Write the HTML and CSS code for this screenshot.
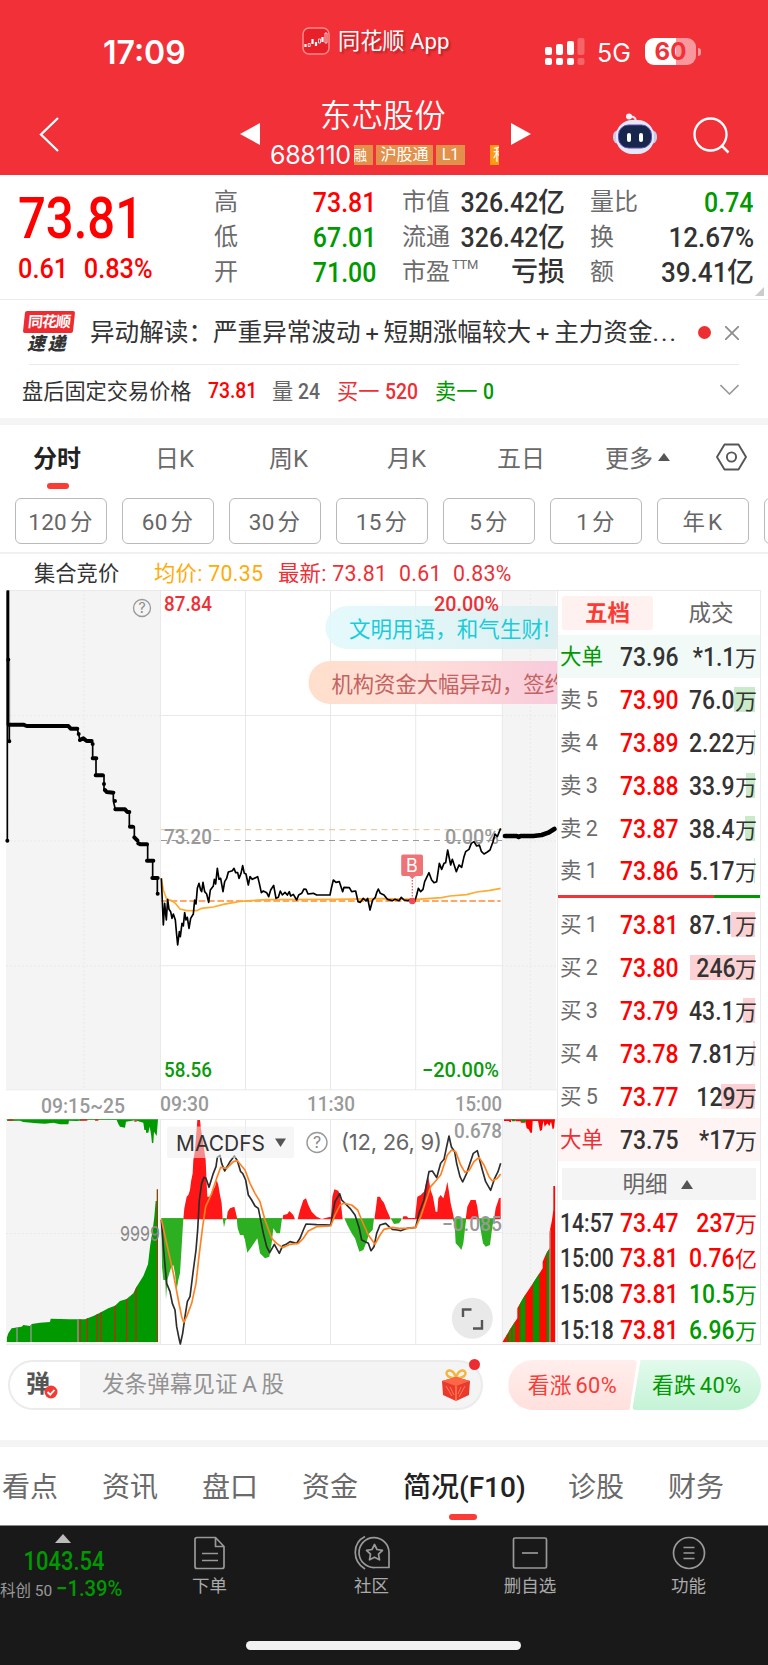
FILE: index.html
```html
<!DOCTYPE html>
<html lang="zh-CN">
<head>
<meta charset="utf-8">
<title>东芯股份 688110</title>
<link rel="stylesheet" href="styles.css">
</head>
<body>
<header class="top">
  <div class="status">
    <div class="clock">17:09</div>
    <div class="brand">
      <svg width="28" height="28" viewBox="0 0 28 28"><rect x="1" y="1" width="26" height="26" rx="6" fill="#e8202a" stroke="#ff8a8a" stroke-width="1.5"/><path d="M3.500 17v3M10.500 12v5M14 15v4M20.500 10v5" stroke="#fff" stroke-width="2.200" fill="none"/><path d="M6.200 16.500h2v3h-2zM16.500 12h2v4h-2zM23 6h2v10h-2z" stroke="#fff" stroke-width=".8" fill="none"/></svg>
      <span>同花顺 App</span>
    </div>
    <svg class="signal" width="40" height="28" viewBox="0 0 40 28" fill="#fff"><rect x="0" y="9" width="7" height="8" rx="2"/><rect x="11" y="6" width="7" height="11" rx="2"/><rect x="22" y="3" width="7" height="14" rx="2"/><rect x="32.500" y="0" width="7" height="17" rx="2" opacity=".25"/><rect x="0" y="20" width="7" height="7" rx="2"/><rect x="11" y="20" width="7" height="7" rx="2"/><rect x="22" y="20" width="7" height="7" rx="2"/><rect x="32.500" y="20" width="7" height="7" rx="2" opacity=".25"/></svg>
    <div class="net">5G</div>
    <div class="battery"><span>60</span></div>
    <div class="nub"></div>
  </div>
  <div class="nav">
    <svg class="back" width="21" height="37" viewBox="0 0 21 37"><path d="M19 2 2 18.500 19 35" fill="none" stroke="#fff" stroke-width="2.300"/></svg>
    <svg class="prev" width="20" height="22" viewBox="0 0 20 22"><path d="M20 0v22L0 11z" fill="#fff"/></svg>
    <div class="stock">
      <h1>东芯股份</h1>
      <div class="code"><b>688110</b><span class="tag cut">融</span><span class="tag">沪股通</span><span class="tag l1">L1</span><span class="tag last">科</span></div>
    </div>
    <svg class="next" width="20" height="22" viewBox="0 0 20 22"><path d="M0 0v22l20-11z" fill="#fff"/></svg>
    <svg class="robot" width="44" height="42" viewBox="0 0 44 42"><path d="M15 4q7-2 8 4" fill="none" stroke="#e4e6f8" stroke-width="2"/><circle cx="16" cy="3.500" r="3" fill="#f4f4fc"/><rect x="0" y="17" width="44" height="14" rx="6" fill="#c9cdec"/><rect x="3" y="7" width="38" height="34" rx="16" fill="#e6e8f8"/><rect x="5.500" y="12" width="33" height="23" rx="10" fill="#17264b" stroke="#5b4bb4"/><rect x="14" y="20" width="4" height="9" rx="2" fill="#fff"/><rect x="26" y="20" width="4" height="9" rx="2" fill="#fff"/></svg>
    <svg class="search" width="37" height="37" viewBox="0 0 37 37"><circle cx="17.500" cy="17.500" r="16" fill="none" stroke="#fff" stroke-width="2.300"/><path d="m29 29 6.500 6.500" stroke="#fff" stroke-width="2.500"/></svg>
  </div>
</header>

<section class="quote">
  <div class="last-price">
    <strong>73.81</strong>
    <p><span>0.61</span><span>0.83%</span></p>
  </div>
  <dl>
    <div><dt>高</dt><dd class="red"><b>73.81</b></dd></div>
    <div><dt>低</dt><dd class="green"><b>67.01</b></dd></div>
    <div><dt>开</dt><dd class="green"><b>71.00</b></dd></div>
  </dl>
  <dl>
    <div><dt>市值</dt><dd><b>326.42</b>亿</dd></div>
    <div><dt>流通</dt><dd><b>326.42</b>亿</dd></div>
    <div><dt>市盈<sup>TTM</sup></dt><dd>亏损</dd></div>
  </dl>
  <dl>
    <div><dt>量比</dt><dd class="green"><b>0.74</b></dd></div>
    <div><dt>换</dt><dd><b class="wide">12.67%</b></dd></div>
    <div><dt>额</dt><dd><b class="wide">39.41</b>亿</dd></div>
  </dl>
  <i class="corner"></i>
</section>

<section class="news">
  <div class="logo"><span class="logo-top"><em>同花顺</em></span><span class="logo-bottom">速 递</span></div>
  <p>异动解读：严重异常波动<i>+</i>短期涨幅较大<i>+</i>主力资金<u>...</u></p>
  <span class="dot"></span>
  <svg width="14" height="14" viewBox="0 0 14 14"><path d="m0 0 14 14M14 0 0 14" stroke="#8e8e8e" stroke-width="1.800"/></svg>
</section>

<section class="after">
  <span>盘后固定交易价格</span>
  <b class="red">73.81</b>
  <span class="grey">量 <b>24</b></span>
  <span class="crimson">买一 <b>520</b></span>
  <span class="green">卖一 <b>0</b></span>
  <svg width="19" height="11" viewBox="0 0 19 11"><path d="m.5 1 9 9 9-9" fill="none" stroke="#999" stroke-width="1.600"/></svg>
</section>

<nav class="periods">
  <span class="on">分时</span><span>日K</span><span>周K</span><span>月K</span><span>五日</span><span>更多<i class="up"></i></span>
  <svg width="31" height="28" viewBox="0 0 31 28"><path d="M8.500 1.500h14L30 14l-7.500 12.500h-14L1 14z" fill="none" stroke="#555" stroke-width="1.900" stroke-linejoin="round"/><circle cx="15.500" cy="14" r="4.600" fill="none" stroke="#555" stroke-width="1.900"/></svg>
</nav>

<div class="minutes">
  <span>120 分</span><span>60 分</span><span>30 分</span><span>15 分</span><span>5 分</span><span>1 分</span><span>年 K</span><span></span>
</div>

<div class="info"><span>集合竞价</span><span class="amber">均价: 70.35</span><span class="crimson">最新: 73.81</span><span class="crimson">0.61</span><span class="crimson">0.83%</span></div>

<main class="board">
<svg class="chart" width="557" height="757" viewBox="0 590 557 757">
  <defs>
    <linearGradient id="pinkPill" x1="0" x2="1"><stop offset="0" stop-color="#ffdcc8"/><stop offset=".45" stop-color="#ffdcd6"/><stop offset="1" stop-color="#f8c8da"/></linearGradient>
    <linearGradient id="cyanPill" x1="0" x2="1"><stop offset="0" stop-color="#e2f9fc"/><stop offset="1" stop-color="#d9eeF0"/></linearGradient>
    <clipPath id="volL"><path d="M20 727V715L25 700 35 685 65 680 70 675 90 678 95 672 120 668 150 666 152 656 210 658 255 658 280 648 300 638 325 625 345 617 360 603 380 597 400 580 408 563 430 528 444 493 450 440 458 390 463 350 467 303 470 303V268H474V727z"/></clipPath>
    <clipPath id="volR"><path d="M1507 727 1520 705 1535 680 1552 655V625L1572 590 1592 560 1617 522 1628 505V485L1639 460 1649 445V395L1656 360 1660 330V258H1666V727z"/></clipPath>
  </defs>
  <rect x="6" y="591" width="154" height="498" fill="#f4f4f4"/>
  <rect x="502" y="591" width="54" height="498" fill="#f4f4f4"/>
  <rect x="6" y="1119" width="154" height="225" fill="#f4f4f4"/>
  <rect x="502" y="1119" width="54" height="225" fill="#f4f4f4"/>
  <g stroke="#e9e9e9" fill="none">
    <path d="M6 590.500H557M6 1089.800H557M6 1119.500H557M6 1344.500H557M160.500 590V1090M160.500 1119V1345M502.300 590V1090M502.300 1119V1345M245.500 590V1090M330.500 590V1090M415.700 590V1090M245.500 1119V1345M330.500 1119V1345M415.700 1119V1345M160 715.500H502M160 965.700H502M160 1232.500H502"/>
    <path stroke-dasharray="2 2" d="M84 590V1090M84 1119V1345M530.300 590V1090M530.300 1119V1345M6 715.800H160M502 715.800H556M6 966H160M502 966H556M6 1233.500H160M502 1233.500H556M6 841H160M502 841H556"/>
  </g>
  <g>
    <path d="M557 606H347a21 21 0 0 0 0 43H557z" fill="url(#cyanPill)" opacity=".9"/>
    <path d="M557 661H330a21 21 0 0 0 0 43H557z" fill="url(#pinkPill)" opacity=".93"/>
    <g class="cjk"><text x="349" y="636.500" textLength="201" lengthAdjust="spacing" font-size="21.500" fill="#19ccd9">文明用语，和气生财!</text>
    <text x="331.500" y="691.500" font-size="21.300" fill="#c4625f">机构资金大幅异动，签约</text></g>
  </g>
  <g fill="none" stroke-width="1.200"><path d="M161 829.700H502" stroke="#e6cda8" stroke-dasharray="6 4.500"/><path d="M161 840.500H502" stroke="#999" stroke-dasharray="6 4.500"/></g>
  <g class="num" font-size="20.500">
    <text x="164" y="611" textLength="48" lengthAdjust="spacingAndGlyphs" fill="#ee2f35">87.84</text>
    <text x="434" y="611" textLength="65" lengthAdjust="spacingAndGlyphs" fill="#ee2f35">20.00%</text>
    <text x="164" y="844" textLength="48" lengthAdjust="spacingAndGlyphs" fill="#999">73.20</text>
    <text x="445" y="844" textLength="54" lengthAdjust="spacingAndGlyphs" fill="#999">0.00%</text>
    <text x="164" y="1077" textLength="48" lengthAdjust="spacingAndGlyphs" fill="#0a9a0a">58.56</text>
    <text x="422" y="1077" textLength="77" lengthAdjust="spacingAndGlyphs" fill="#0a9a0a">−20.00%</text>
    <g fill="#999"><text x="41" y="1113" textLength="84" lengthAdjust="spacingAndGlyphs">09:15~25</text>
    <text x="160" y="1111" textLength="49" lengthAdjust="spacingAndGlyphs">09:30</text>
    <text x="307" y="1111" textLength="48" lengthAdjust="spacingAndGlyphs">11:30</text>
    <text x="455" y="1111" textLength="47" lengthAdjust="spacingAndGlyphs">15:00</text></g>
  </g>
  <g fill="none" stroke="#999" stroke-width="1.300"><circle cx="142" cy="608" r="8.500"/></g>
  <text class="sans" x="142" y="613" font-size="14" text-anchor="middle" fill="#888">?</text>
  <g transform="translate(0 580) scale(.33333)" fill="none" stroke="#000" stroke-linejoin="round" stroke-linecap="round">
    <path stroke-width="5" d="M22 35V782M28 435V485M232 447 240 480M275 485 278 493V535H288V585H312V632M340 638V663L346 688M388 697V740H403V772M443 793V842H458V894H472V942"/>
    <path stroke-width="8" stroke-linecap="butt" d="M24 31V435"/>
    <path stroke-width="3" stroke="#777" stroke-linecap="butt" d="M29 245V430"/>
    <path stroke-width="12" d="M26 434H70L80 438H205L212 446H232M236 462V462.100M240 480 250 475 260 483H275M278 492V492.100M278 535H289M287 586H308M312 612V612.100M315 630 320 636 340 638M345 663V663.100M346 688H375L382 696H388M390 740H398M403 772 412 781M415 790 422 793H441M441 842H460M457 894H473M473 941V941.100M28 484V484.100M22 782V782.100M25 239V239.100"/>
    <path stroke-width="14" d="M1515 768H1550L1556 771 1562 768H1600L1625 765 1645 758 1663 747"/>
  </g>
  <g transform="translate(0 840) scale(.33333)" fill="none" stroke-linejoin="round">
    <path stroke="#ff8a33" stroke-width="5" stroke-dasharray="20 8" d="M484 183H1502"/>
    <path stroke="#ffab2e" stroke-width="5" d="M484 115 490 150 500 178 515 182 526 190 540 207 560 212 590 212 605 205 640 201 670 193 720 184 800 179 1000 178 1150 176 1250 178 1325 173 1350 168 1400 164 1430 156 1470 151 1502 145"/>
    <path stroke="#000" stroke-width="5" d="M484 115 490 255 494 190 499 240 503 178 507 208 512 215 516 235 520 222 526 240 530 285 533 315 538 275 541 290 546 250 550 258 554 218 558 240 562 232 567 265 572 235 580 222 584 180 588 192 592 145 597 130 602 150 605 155 609 127 614 155 620 162 626 187 631 150 640 138 643 118 647 132 652 85 657 118 662 115 669 155 674 125 680 115 685 96 697 92 702 85 707 98 713 98 717 115 723 100 728 77 733 100 738 102 745 135 750 110 757 118 773 110 778 130 784 158 790 153 800 158 806 170 812 150 821 136 828 175 835 172 841 153 847 165 855 157 862 165 868 155 872 168 880 163 890 180 896 165 905 160 912 147 918 148 924 162 940 160 950 165 990 165 994 145 1000 120 1008 127 1018 125 1028 155 1032 142 1048 143 1055 155 1067 153 1074 185 1081 187 1090 175 1098 183 1103 175 1110 210 1118 180 1126 172 1130 158 1135 147 1141 160 1152 165 1162 178 1177 182 1185 178 1197 182 1204 172 1212 180 1224 182 1232 178 1244 185 1250 165 1255 145 1262 155 1269 148 1274 125 1287 98 1295 120 1302 128 1310 125 1318 70 1325 88 1332 70 1337 68 1343 30 1352 75 1357 58 1369 95 1377 75 1385 82 1392 50 1397 35 1407 28 1414 10 1422 5 1430 18 1438 15 1444 34 1452 42 1462 36 1470 30 1479 5 1485 -18 1492 -10 1498 -25 1502 -35"/>
  </g>
  <circle cx="412.300" cy="901" r="3.300" fill="#f04a52"/><path d="M412.300 877V899" stroke="#ee555c" stroke-width="1.200" stroke-dasharray="1.500 1.500"/>
  <path d="M403 854.500H421q2 0 2 2V874q0 2-2 2h-5.500l-3.200 3-3.200-3H403q-1.800 0-1.800-2V856.500q0-2 1.800-2z" fill="#ee7376"/>
  <text class="sans" x="412" y="872" font-size="18" text-anchor="middle" fill="#fff">B</text>
  <g transform="translate(0 1100) scale(.33333)">
    <g clip-path="url(#volL)"><path fill="#090" d="M18 200H476V727H18z"/><path stroke="#b53012" stroke-width="4" d="M240 500V727M262 500V727M291 500V727M303 500V727M345 500V727M380 500V727M408 500V727M473 200V727"/><path stroke="#999" stroke-width="4" d="M51 500V727M93 500V727M234 500V727"/></g>
    <path fill="#090" d="M20 58 22 63 60 62 70 66 110 70 135 71 160 68 180 73 205 73 207 62 230 63 260 60 350 60 355 72 360 80 375 83 378 65 405 61 430 68 433 90H438V98H445L449 80 453 102 456 130 460 128 462 95 470 108 474 58z"/>
    <path stroke="#d22" stroke-width="4" d="M240 60H262M285 60H295M403 63H410M25 60H40"/>
    <g clip-path="url(#volR)"><path fill="#ff0800" d="M1507 200H1668V730H1507z"/><path stroke="#090" stroke-width="8" d="M1530 400V727M1541 400V727M1566 400V727M1572 400V727M1606 400V727M1614 400V727M1644 400V727"/><path stroke="#090" stroke-width="3" d="M1520 400V727M1560 400V727M1600 400V727"/><path stroke="#999" stroke-width="4" d="M1650 390V727"/></g>
    <path fill="#f00" d="M1512 58V63H1528V66H1533V60H1546V64H1562V68H1575V60L1580 85 1586 88 1591 98 1596 98 1598 63H1614L1620 93 1626 90 1630 62 1634 80 1642 70 1648 78 1653 65 1658 88 1662 85 1665 58z"/><path stroke="#090" stroke-width="6" d="M1535 61H1545M1563 63H1577"/>
    <path fill="#ff1717" d="M550 358 553 325 560 290 565 285 570 270 573 245 578 220 580 180 585 150 592 60H600L603 88 610 130 617 180 620 250 622 290H632L635 275 645 260 650 240 655 255 660 285 665 310 668 358zM680 358 683 335 690 325 703 320 707 335 712 358zM847 358 850 345 862 342 868 333 880 345 885 358zM893 358 900 330 910 300 918 295 925 315 935 335 950 350 965 357 985 352 993 350 997 290 1003 268 1015 272 1020 285 1025 330 1028 358zM1123 358 1127 330 1132 290H1140L1145 300 1152 308 1160 330 1167 345 1172 358zM1207 358 1210 349 1220 349 1225 354H1245L1252 290 1262 285 1272 275 1279 245 1285 232 1292 270 1299 290 1307 335H1312L1315 295 1322 285 1330 295 1337 270 1342 245 1347 275 1352 310 1360 345 1362 358zM1397 358 1402 320 1412 300H1427L1432 320 1437 358zM1482 358 1487 325 1497 295 1502 293V358z"/>
    <path fill="#2caf20" d="M484 355 486 500 490 540H496L498 598 502 540 508 520 514 500 520 495 525 520 530 570 535 540 540 520 545 440 550 355zM668 355 672 382 678 355zM710 355 713 385 720 405H730L735 420 742 458 755 440 765 425 772 415 780 460 795 475 808 470 815 430 820 385 830 400H840L846 355zM1033 355 1042 375 1055 400 1065 415 1078 455 1090 450 1100 425 1108 400 1118 390 1122 355zM1172 355 1182 372 1197 370 1204 360V355zM1357 355 1364 372 1367 430 1377 440 1384 450 1390 430 1397 370 1399 355zM1437 355 1442 390 1449 430 1457 440 1470 435 1477 380 1482 355z"/>
    <path d="M484 357H550M668 357H680M712 357H846" stroke="#2caf20" stroke-width="5"/>
    <g fill="none" stroke-linejoin="round" stroke-width="5"><path stroke="#2d2d2d" d="M484 360 490 440 500 550 510 575 517 610 525 630 530 680 537 715 541 732 548 700 555 650 562 605 570 590 580 510 588 450 593 390 598 300 605 250 612 232 618 235 627 262 640 220 648 200 652 172 660 166 665 190 674 213 690 185 703 168 712 182 722 215 728 220 737 240 745 285 755 300 765 318 775 325 780 350 790 400 800 440 809 458 823 433 838 460 848 437 860 432 870 425 890 430 900 415 910 390 918 372 950 374 992 375 998 340 1005 305 1019 281 1025 300 1050 325 1065 345 1078 385 1085 420 1105 430 1113 452 1122 440 1130 400 1140 375 1157 370 1167 380 1177 388 1192 390 1202 392 1222 385 1247 382 1257 340 1272 300 1280 250 1287 215 1297 213 1310 233 1322 190 1332 178 1340 140 1347 108 1354 140 1364 155 1370 190 1380 230 1388 246 1400 220 1410 190 1420 160 1432 152 1439 180 1447 210 1457 245 1472 271 1484 235 1494 215 1502 190"/>
    <path stroke="#ff8222" d="M484 357 500 430 520 520 535 600 545 650 551 667 560 650 575 610 588 550 598 460 608 380 617 320 635 280 650 235 662 202 680 205 700 185 712 182 735 210 750 250 765 280 780 305 795 360 815 415 830 430 848 443 870 433 895 430 910 415 925 393 950 380 992 378 1005 345 1020 315 1032 310 1055 315 1073 330 1085 360 1105 405 1125 433 1140 405 1152 388 1177 382 1197 385 1222 385 1247 382 1262 350 1277 305 1292 260 1307 243 1322 225 1342 165 1355 150 1367 155 1382 195 1395 217 1407 212 1422 185 1437 172 1452 195 1467 230 1477 243 1492 235 1502 222"/></g>
  </g>
  <rect x="167" y="1126.500" width="127" height="31.500" rx="2" fill="#eee" fill-opacity=".55"/>
  <g class="sans" font-size="22"><text x="176" y="1150.500" textLength="89" lengthAdjust="spacingAndGlyphs" fill="#333">MACDFS</text><path d="M275 1138.500h11l-5.500 8.500z" fill="#555"/>
    <circle cx="317" cy="1142.500" r="10" fill="none" stroke="#999" stroke-width="1.400"/><text x="317" y="1148" font-size="16" text-anchor="middle" fill="#888">?</text>
    <text x="341" y="1150" textLength="101" lengthAdjust="spacing" fill="#666">(12, 26, 9)</text>
    <text x="120" y="1241" font-size="20" textLength="40" lengthAdjust="spacingAndGlyphs" fill="#888">9999</text></g>
  <g class="num" font-size="20.500" fill="#999"><text x="454" y="1138" textLength="48" lengthAdjust="spacingAndGlyphs">0.678</text><text x="442" y="1231" textLength="60" lengthAdjust="spacingAndGlyphs">−0.085</text></g>
  <circle cx="472.300" cy="1318.300" r="20.500" fill="#e9e9e9"/><path d="M463 1317V1309.500H471.500M473 1328.500H482V1320" fill="none" stroke="#555" stroke-width="2.400"/>
</svg>

<aside class="book">
  <div class="book-tabs"><b>五档</b><span>成交</span></div>
  <div class="row big-sell"><span class="green">大单</span><b class="dark">73.96</b><em><b>*1.1</b>万</em></div>
  <div class="row sell"><span>卖 5</span><b>73.90</b><em><i style="width:21px"></i><b>76.0</b>万</em></div>
  <div class="row sell"><span>卖 4</span><b>73.89</b><em><i style="width:1px"></i><b>2.22</b>万</em></div>
  <div class="row sell"><span>卖 3</span><b>73.88</b><em><i style="width:9px"></i><b>33.9</b>万</em></div>
  <div class="row sell"><span>卖 2</span><b>73.87</b><em><i style="width:10px"></i><b>38.4</b>万</em></div>
  <div class="row sell"><span>卖 1</span><b>73.86</b><em><i style="width:1px"></i><b>5.17</b>万</em></div>
  <div class="ratio"></div>
  <div class="row buy"><span>买 1</span><b>73.81</b><em><i style="width:24px"></i><b>87.1</b>万</em></div>
  <div class="row buy"><span>买 2</span><b>73.80</b><em><i style="width:65px"></i><b>246</b>万</em></div>
  <div class="row buy"><span>买 3</span><b>73.79</b><em><i style="width:12px"></i><b>43.1</b>万</em></div>
  <div class="row buy"><span>买 4</span><b>73.78</b><em><i style="width:2px"></i><b>7.81</b>万</em></div>
  <div class="row buy"><span>买 5</span><b>73.77</b><em><i style="width:34px"></i><b>129</b>万</em></div>
  <div class="row big-buy"><span class="crimson">大单</span><b class="dark">73.75</b><em><b>*17</b>万</em></div>
  <div class="detail">明细<i class="up"></i></div>
  <div class="row trade"><b class="time">14:57</b><b>73.47</b><em class="red"><b>237</b>万</em></div>
  <div class="row trade"><b class="time">15:00</b><b>73.81</b><em class="red"><b>0.76</b>亿</em></div>
  <div class="row trade"><b class="time">15:08</b><b>73.81</b><em class="green"><b>10.5</b>万</em></div>
  <div class="row trade"><b class="time">15:18</b><b>73.81</b><em class="green"><b>6.96</b>万</em></div>
</aside>
</main>

<section class="danmu">
  <div class="box">
    <div class="mark">弹<svg width="14" height="14" viewBox="0 0 14 14"><circle cx="7" cy="7" r="6.500" fill="#f33b34"/><path d="m3.500 7 2.700 2.700L10.500 5" fill="none" stroke="#fff" stroke-width="1.800"/></svg></div>
    <p>发条弹幕见证 A 股</p>
    <svg class="gift" width="30" height="32" viewBox="0 0 30 32"><path d="M15 9C3 9 4 1 9 1.500c3 .5 5 4 6 7 1-3 3-6.500 6-7 5-.5 6 7.500-6 7.500z" fill="none" stroke="#f5b53c" stroke-width="2.400"/><path d="m1 12 14-4 14 4-1 14-13 6-13-6z" fill="#e93a2c"/><path d="m1 12 14-4 14 4-14 5z" fill="#ff6547"/><path d="M15 17v15" stroke="#ff7b4c" stroke-width="1.500"/><path d="m5 17 6 10M9 18l4 8M24 17l-6 11M20 18l-3 7" stroke="#ff7a54"/></svg>
    <span class="badge"></span>
  </div>
  <div class="vote up-vote">看涨 60%</div>
  <div class="vote down-vote">看跌 40%</div>
</section>

<nav class="sections"><span>看点</span><span>资讯</span><span>盘口</span><span>资金</span><span class="on">简况(F10)</span><span>诊股</span><span>财务</span></nav>

<footer class="tabbar">
  <div class="items">
    <div class="index"><i class="up"></i><strong>1043.54</strong><p>科创 50 <b>−1.39%</b></p></div>
    <div class="item"><svg width="32" height="34" viewBox="0 0 32 34"><path d="M3 1.500H21.500L30 10.500V30.500a2 2 0 0 1-2 2H3a2 2 0 0 1-2-2V3.500a2 2 0 0 1 2-2zM21.500 1.500V10.500H30M8 17.500H24M8 24.500H24"/></svg>下单</div>
    <div class="item"><svg width="36" height="36" viewBox="0 0 36 36"><path d="M11 34C-2 26-2 8 11 1.500M35 32.500H21A15 15 0 1 1 35 17.500zM20.500 9.500l2.500 5 5.500.8-4 3.900 1 5.600-5-2.600-5 2.600 1-5.600-4-3.900 5.500-.8z"/></svg>社区</div>
    <div class="item"><svg width="36" height="32" viewBox="0 0 36 32"><rect x="1.500" y="1" width="33" height="30" rx="1.500"/><path d="M10 16H26"/></svg>删自选</div>
    <div class="item"><svg width="34" height="34" viewBox="0 0 34 34"><circle cx="17" cy="17" r="15.500"/><path d="M11.500 11.500h11M11.500 17h11M11.500 22.500h11"/></svg>功能</div>
  </div>
  <div class="home"></div>
</footer>
</body>
</html>
```
FILE: styles.css
```css
* { box-sizing: border-box; }
body { margin: 0; width: 768px; background: #fff; color: #333; font-family: Roboto, "Noto Sans CJK SC", sans-serif; overflow-x: hidden; }
h1, p, dl, dd, dt { margin: 0; font-weight: 400; }
i, em { font-style: normal; }
u { text-decoration: none; }
svg { display: block; flex: none; }
.red { color: #f00; }
.crimson { color: #ee2f35; }
.green { color: #090; }
.grey { color: #666; }
.amber { color: #ffab0a; }
.up { display: inline-block; border: 6px solid transparent; border-top: 0; border-bottom: 8px solid #555; }

/* header */
.top { height: 175px; background: #f23037; color: #fff; }
.status { height: 80px; display: flex; align-items: flex-start; }
.clock { margin: 34px 0 0 103px; width: 199px; font: 600 32px/38px Inter, sans-serif; letter-spacing: 0; }
.brand { display: flex; width: 243px; margin-top: 27px; gap: 8px; font-size: 22.200px; line-height: 28px; text-shadow: 2px 2px 2px #0004; }
.signal { margin-top: 38px; }
.net { width: 47px; margin: 39px 0 0 12px; font: 400 25px/29px Inter, sans-serif; }
.battery { width: 51px; height: 27px; margin-top: 38px; margin-left: 1px; border-radius: 9px; background: linear-gradient(90deg, #fff 61%, #f9989c 61%); text-align: center; font: 700 24px/27px Inter, sans-serif; color: #f23037; }
.nub { width: 3px; height: 8px; margin: 48px 0 0 2px; border-radius: 0 4px 4px 0; background: #f9989c; }
.nav { height: 95px; display: flex; align-items: flex-start; }
.back { margin: 36px 180px 0 39px; }
.prev, .next { margin-top: 43px; }
.stock { width: 231px; margin: 0 10px; }
.stock h1 { margin-top: 14px; padding-left: 50px; font-size: 31.400px; line-height: 46px; font-weight: 350; white-space: nowrap; }
.code { display: flex; align-items: flex-start; width: 230px; height: 21px; margin-top: 5px; overflow: hidden; }
.code b { width: 84px; flex: none; font: 400 25px/21px Inter, sans-serif; letter-spacing: -.3px; white-space: nowrap; }
.tag { flex: none; width: 57px; height: 20px; margin-right: 3px; text-align: center; background: #e2904a; font-size: 16px; line-height: 20px; }
.tag.cut { width: 19px; direction: rtl; overflow: hidden; padding-right: 6px; font-size: 14px; }
.tag.l1 { width: 29px; margin-right: 25px; }
.tag.last { width: 9px; margin: 0; overflow: hidden; background: #ff9a10; text-align: left; padding-left: 3px; }
.robot { margin: 33px 36px 0 82px; }
.search { margin-top: 37px; }

/* quote */
.quote { position: relative; height: 125px; display: grid; grid-template-columns: 194px 162px 162px 163px; padding: 10px 0 0 20px; border-bottom: 1px solid #ececec; }
.quote dl:nth-of-type(2) { margin-left: 26px; margin-right: -27px; }
.quote dl:nth-of-type(3) { margin-left: 52px; margin-right: -53px; }
.last-price { color: #f00; margin-left: -2px; }
.last-price strong { display: block; height: 65px; font-size: 57px; line-height: 67px; font-weight: 500; transform: scaleX(.86); transform-origin: 0 0; }
.last-price p { display: flex; gap: 17px; height: 38px; font-size: 27.500px; line-height: 38px; font-weight: 500; transform: scaleX(.92); transform-origin: 0 0; }
.quote dl > div { display: flex; justify-content: space-between; height: 35px; line-height: 35px; }
.quote dt { font-size: 24px; color: #6c6c6c; font-weight: 400; white-space: nowrap; }
.quote dd { font-size: 27px; font-weight: 500; white-space: nowrap; }
.quote dd b { display: inline-block; font-size: 28px; font-weight: 500; transform: scaleX(.89); transform-origin: 100% 0; }
.quote dd b.wide { transform: scaleX(.93); }
.quote sup { display: inline-block; font-size: 13px; line-height: 13px; margin-left: 2px; vertical-align: 11px; letter-spacing: -.3px; }
.corner { position: absolute; right: 4px; bottom: 3px; border-left: 9px solid transparent; border-bottom: 9px solid #ccc; }

/* news */
.news { display: flex; align-items: center; height: 65px; margin: 0 29px 0 22px; position: relative; }
.news::after { content: ""; position: absolute; left: 7px; right: 0; bottom: 0; height: 1px; background: #e9e9e9; }
.logo { width: 53px; margin-right: 15px; }
.logo-top { display: block; width: 50px; height: 22px; margin-left: 2px; border-radius: 2px; background: #ee2b30; color: #fff; font-size: 15px; line-height: 22px; font-weight: 700; text-align: center; transform: skewX(-6deg); letter-spacing: -1px; }
.logo-bottom { display: block; margin-left: 5px; font-size: 18px; line-height: 22px; font-weight: 900; font-style: italic; letter-spacing: -1px; }
.news p { width: 608px; font-size: 24.600px; line-height: 36px; white-space: nowrap; }
.news p i { display: inline-block; width: 23px; text-align: center; font-family: Inter, sans-serif; font-weight: 400; }
.news p u { letter-spacing: 2px; }
.dot { width: 13px; height: 13px; border-radius: 50%; background: #ee2f31; margin-right: 14px; }

/* after-hours */
.after { display: flex; align-items: center; height: 60px; padding: 3px 29px 7px 22px; border-bottom: 7px solid #f4f4f4; font-size: 21.200px; white-space: nowrap; }
.after > span:first-child { width: 186px; }
.after b { font-weight: 500; font-size: 22.500px; display: inline-block; transform: scaleX(.86); transform-origin: 0 0; }
.after > b { width: 64px; }
.after .grey { width: 65px; }
.after .crimson { width: 98px; }
.after svg { margin-left: auto; }

/* period tabs */
.periods { display: grid; grid-template-columns: 122px 114px 118px 110px 108px 111px 31px; align-items: center; height: 66px; padding: 0 0 3px 33px; font-size: 24px; color: #6a6a6a; font-weight: 400; white-space: nowrap; }
.periods .on { position: relative; color: #222; font-weight: 700; }
.periods .on::after { content: ""; position: absolute; left: 14px; top: 44px; width: 22px; height: 6px; border-radius: 3px; background: #fb3b35; }
.periods .up { margin: 0 0 6px 5px; }
.minutes { display: flex; gap: 15px; height: 63px; padding: 7px 0 0 14.500px; overflow: hidden; border-bottom: 2px solid #f0f0f0; }
.minutes span { flex: 0 0 92px; height: 46px; border: 1.500px solid #b9b9b9; border-radius: 6px; text-align: center; font-size: 22.500px; line-height: 46px; color: #666; font-weight: 400; letter-spacing: .3px; word-spacing: -3px; }
.info { display: flex; height: 36px; padding-left: 34px; font-size: 21.300px; line-height: 39px; white-space: nowrap; font-weight: 400; letter-spacing: .3px; }
.info span:nth-child(1) { width: 120px; color: #333; letter-spacing: 0; }
.info span:nth-child(2) { width: 124px; }
.info span:nth-child(3) { width: 121px; }
.info span:nth-child(4) { width: 54px; }

/* board */
.board { display: flex; height: 755px; }
.chart .num { font-family: Roboto, sans-serif; font-weight: 500; }
.chart .sans { font-family: Inter, sans-serif; }
.chart .cjk { font-family: "Noto Sans CJK SC", sans-serif; }
.book { width: 204px; height: 755px; border: 1px solid #e9e9e9; }
.book-tabs { display: grid; grid-template-columns: 91px 1fr; height: 44px; padding: 5px 0 6px 4px; font-size: 22.500px; line-height: 34px; color: #666; text-align: center; }
.book-tabs b { background: #fff1f0; color: #fb3b35; font-weight: 700; border-radius: 3px; }
.book-tabs span { padding-left: 9px; font-weight: 400; }
.row { display: grid; grid-template-columns: 60px 58px 1fr; height: 42.900px; line-height: 44.500px; padding: 0 3px 0 2px; font-size: 22px; white-space: nowrap; }
.row > span { color: #6c6c6c; font-weight: 400; font-size: 21.500px; word-spacing: -1px; }
.row > span.green { color: #090; }
.row > span.crimson { color: #ee2f35; }
.row b { display: inline-block; font-size: 25.500px; font-weight: 500; color: #f00; transform: scaleX(.9); transform-origin: 0 0; }
.row > b { width: 64px; }
.row b.dark, .row b.time { color: #333; }
.row b.time { transform: scaleX(.83); }
.row em { position: relative; text-align: right; color: #333; z-index: 0; }
.row em b { color: inherit; transform-origin: 100% 0; }
.row em.red { color: #f00; }
.row em.green { color: #090; }
.row em i { position: absolute; right: 2px; top: 9px; height: 25px; z-index: -1; }
.sell i { background: #c9ebc9; }
.buy i { background: #fbd1d3; }
.big-sell { background: #f1faf7; }
.big-buy { background: #fff4f4; }
.ratio { height: 3px; margin: 3px 0 5px; background: linear-gradient(90deg, #f53236 77%, #090 77%); }
.detail { height: 32px; margin: 7px 4px 5px; background: #f4f4f4; text-align: center; font-size: 22.500px; line-height: 32px; color: #666; font-weight: 400; padding-right: 3px; }
.detail .up { margin-left: 13px; border-bottom-width: 9px; margin-bottom: 3px; }
.trade { height: 35.700px; line-height: 36.500px; }

/* danmu */
.danmu { display: flex; height: 102px; padding: 15px 7px 0 8px; border-bottom: 7px solid #f4f4f4; }
.box { position: relative; display: flex; align-items: center; width: 476px; height: 50px; border: 2px solid #ebebeb; border-radius: 25px; background: #f4f4f4; }
.mark { position: relative; width: 70px; height: 46px; padding-left: 16px; border-radius: 23px 0 0 23px; background: #fff; font-size: 24px; line-height: 44px; font-weight: 700; color: #555; }
.mark svg { position: absolute; left: 34px; top: 23px; }
.box p { width: 361px; padding-left: 22px; font-size: 22.600px; font-weight: 400; color: #929292; line-height: 46px; word-spacing: -1px; }
.badge { position: absolute; right: 1px; top: -3px; width: 11px; height: 11px; border-radius: 50%; background: #ee2b30; }
.vote { height: 50px; font-size: 21.800px; line-height: 52px; text-align: center; white-space: nowrap; word-spacing: -2px; letter-spacing: .3px; }
.up-vote { width: 129px; margin-left: 25px; padding-right: 1px; color: #fb3b35; background: linear-gradient(#ffeeec, #ffe0dd); border-radius: 25px 4px 4px 25px; clip-path: polygon(0 0, 100% 0, 94% 100%, 0 100%); }
.down-vote { width: 129px; margin-left: -5px; color: #090; background: linear-gradient(#e2faec, #c5f3d6); border-radius: 4px 25px 25px 4px; clip-path: polygon(6.500% 0, 100% 0, 100% 100%, 0 100%); }

/* section tabs */
.sections { display: grid; grid-template-columns: 100px 100px 100px 101px 165px 100px 1fr; height: 78px; padding-left: 2px; font-size: 28px; line-height: 82px; color: #6a6a6a; font-weight: 400; white-space: nowrap; }
.sections .on { position: relative; color: #222; font-weight: 500; }
.sections .on::after { content: ""; position: absolute; left: 46px; top: 67px; width: 28px; height: 6px; border-radius: 3px; background: #fb3b35; }

/* tab bar */
.tabbar { height: 140px; background: #191919; color: #aaa; border-top: 1px solid #888; }
.items { display: grid; grid-template-columns: 128px 163px 161px 156px 161px; height: 115px; }
.index { display: flex; flex-direction: column; align-items: center; padding-top: 8px; color: #090; }
.index .up { margin-right: 3px; border-width: 0 8px 9px; border-bottom-color: #bbb; }
.index strong { height: 28px; margin-top: 4px; font-size: 25.500px; line-height: 28px; font-weight: 500; transform: scaleX(.86); }
.index p { height: 28px; width: 128px; font-size: 15.500px; line-height: 27px; color: #999; white-space: nowrap; }
.index b { display: inline-block; font-size: 22.500px; font-weight: 500; color: #090; transform: scaleX(.9); transform-origin: 0 0; }
.item { display: flex; flex-direction: column; align-items: center; padding-top: 9px; font-size: 17.500px; line-height: 24px; font-weight: 400; color: #aaa; }
.item svg { height: 36px; margin-bottom: 3px; fill: none; stroke: #999; stroke-width: 1.700; stroke-linejoin: round; }
.home { width: 275px; height: 9px; margin-left: 246px; border-radius: 5px; background: #f2f2f2; }
```
